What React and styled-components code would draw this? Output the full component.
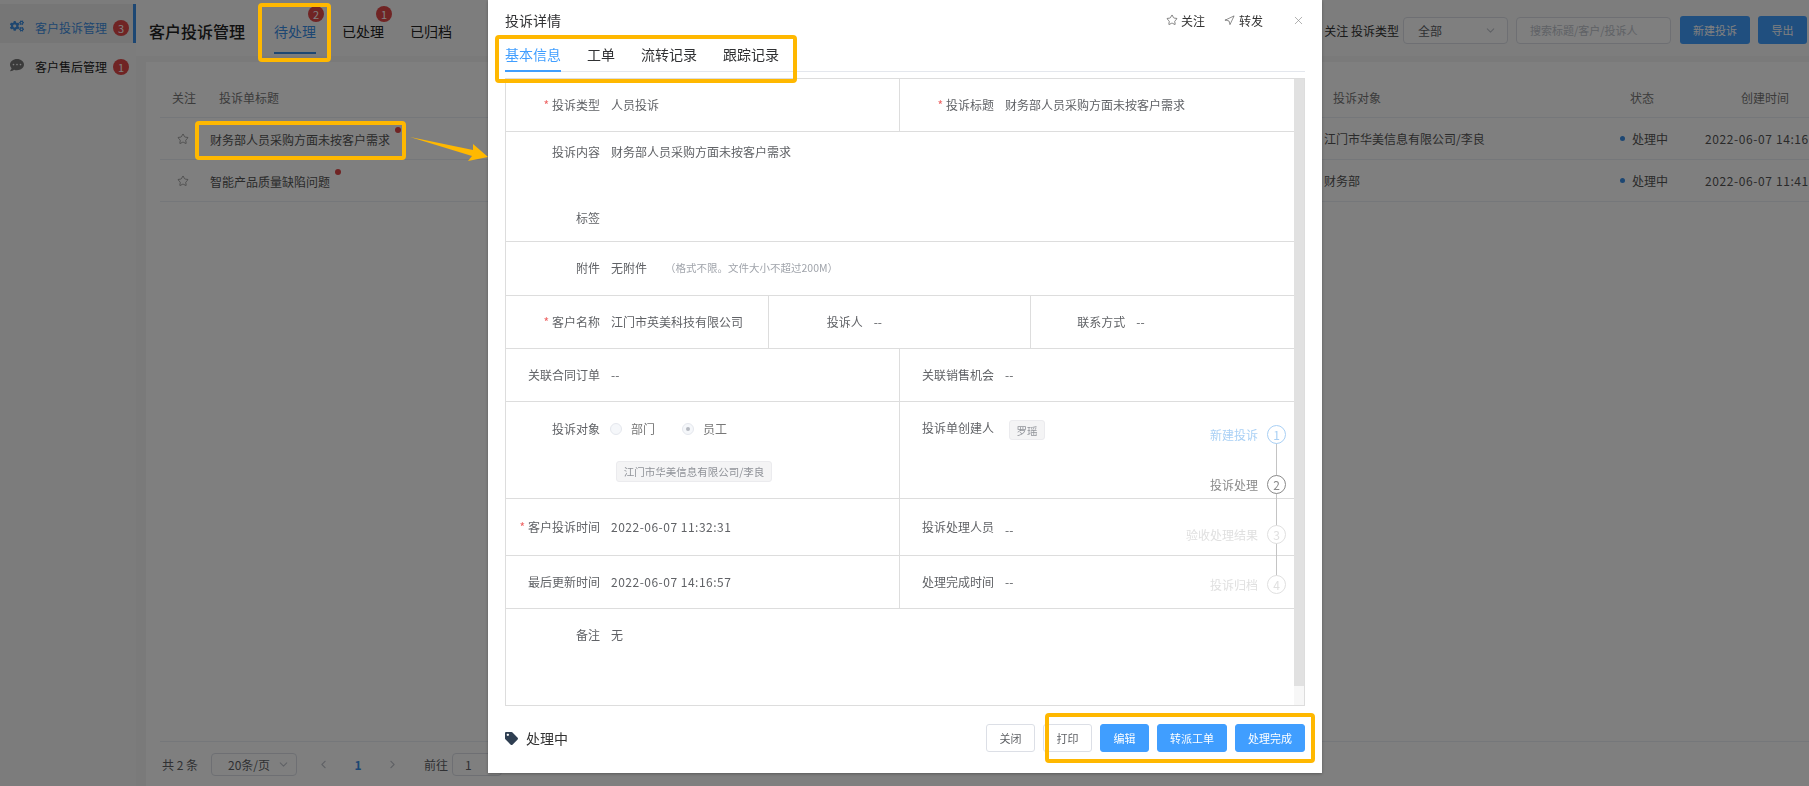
import React from 'react'
import styled, { createGlobalStyle } from 'styled-components'
import { Star, Navigation, X, ChevronDown, ChevronLeft, ChevronRight } from 'lucide-react'
import { FaCogs, FaCommentDots, FaTag } from 'react-icons/fa'

const GlobalStyle = createGlobalStyle`
  html, body { margin: 0; padding: 0; height: 100%; overflow: hidden; }
  body {
    font-family: "Noto Sans CJK SC", "Noto Sans", sans-serif;
    font-size: 12px;
    color: #333;
  }
  * { box-sizing: border-box; }
`

const Page = styled.div`
  display: flex;
  height: 100vh;
  background: #f5f5f5;
  overflow: hidden;
`
const Sidebar = styled.div`
  width: 136px;
  flex-shrink: 0;
  padding-top: 4px;
  background: #f9f9f9;
`
const SideItem = styled.div`
  display: flex;
  align-items: center;
  height: 39px;
  padding: 8px 0 0 10px;
  color: ${p => (p.$active ? '#3f8fe0' : '#222')};
  background: ${p => (p.$active ? '#ededed' : 'transparent')};
  border-right: 3px solid ${p => (p.$active ? '#3a8ee6' : 'transparent')};
  svg { font-size: 14px; color: ${p => (p.$active ? '#3f8fe0' : '#777')}; margin-top: -4px; }
  span { margin-left: 11px; width: 74px; white-space: nowrap; }
`
const Badge = styled.i`
  display: inline-flex;
  align-items: center;
  justify-content: center;
  width: 16px;
  height: 16px;
  border-radius: 50%;
  background: #e04848;
  color: #fff;
  font-style: normal;
  font-size: 11px;
  margin-left: 4px;
`
const Main = styled.div`
  flex: 1;
  min-width: 0;
  display: flex;
  flex-direction: column;
`
const Header = styled.div`
  display: flex;
  align-items: center;
  height: 56px;
  padding: 4px 2px 0 13px;
  background: #fbfbfb;
`
const PageTitle = styled.div`
  font-size: 16px;
  font-weight: 500;
  color: #222;
  width: 125px;
  margin-top: 1px;
`
const TopTabs = styled.div`
  display: flex;
  gap: 26px;
  align-self: stretch;
`
const TopTab = styled.div`
  position: relative;
  display: flex;
  align-items: center;
  font-size: 14px;
  padding-top: 6px;
  margin-bottom: 2px;
  color: ${p => (p.$active ? '#3a8ee6' : '#222')};
  border-bottom: 2px solid ${p => (p.$active ? '#3a8ee6' : 'transparent')};
`
const TabBadge = styled(Badge)`
  position: absolute;
  top: 2px;
  right: -8px;
  margin: 0;
`
const Toolbar = styled.div`
  display: flex;
  align-items: center;
  margin-left: auto;
  color: #333;
`
const FilterLabel = styled.span`
  margin-right: 4px;
  white-space: nowrap;
`
const SelectBox = styled.div`
  display: flex;
  align-items: center;
  justify-content: space-between;
  width: ${p => p.$width}px;
  height: 27px;
  padding: 0 10px 0 14px;
  border: 1px solid #dcdfe6;
  border-radius: 4px;
  background: #fff;
  color: #606266;
  margin-right: ${p => p.$gap || 0}px;
  svg { color: #c0c4cc; }
`
const SearchBox = styled.div`
  display: flex;
  align-items: center;
  width: 155px;
  height: 27px;
  padding: 0 13px;
  border: 1px solid #dcdfe6;
  border-radius: 4px;
  background: #fff;
  color: #c0c4cc;
  font-size: 11px;
  margin-right: 9px;
`
const ToolButton = styled.div`
  display: flex;
  align-items: center;
  justify-content: center;
  width: ${p => p.$width}px;
  height: 28px;
  border-radius: 3px;
  background: #409eff;
  color: #fff;
  font-size: 11px;
  margin-left: ${p => p.$gap || 0}px;
`
const Card = styled.div`
  flex: 1;
  display: flex;
  flex-direction: column;
  margin: 6px 0 0 10px;
  padding: 0 0 0 14px;
  background: #fff;
`
const TableRow = styled.div`
  display: grid;
  grid-template-columns: 50px 1114px 296px 85px 1fr;
  align-items: center;
  height: ${p => (p.$head ? '56px' : '42px')};
  padding-top: ${p => (p.$head ? '16px' : 0)};
  border-bottom: 1px solid #ebeef5;
  color: ${p => (p.$head ? '#777' : '#555')};
  white-space: nowrap;
`
const HeadCell = styled.div`
  padding-left: ${p => p.$pad || 0}px;
`
const StarCell = styled.div`
  padding: 0 0 0 17px;
  display: flex;
  color: #666;
`
const TitleCell = styled.div`
  position: relative;
  display: inline-block;
  justify-self: start;
  padding-top: 2px;
  &::after {
    content: '';
    position: absolute;
    top: -2px;
    right: -11px;
    width: 6px;
    height: 6px;
    border-radius: 50%;
    background: #e04848;
  }
`
const StatusCell = styled.div`
  display: flex;
  align-items: center;
  gap: 7px;
  &::before {
    content: '';
    width: 5px;
    height: 5px;
    border-radius: 50%;
    background: #3a8ee6;
  }
`
const DateCell = styled.div`
  letter-spacing: 0.6px;
`
const Pagination = styled.div`
  display: flex;
  align-items: center;
  margin-top: auto;
  height: 45px;
  border-top: 1px solid #ebeef5;
  padding: 0 2px;
  color: #606266;
  svg { color: #c0c4cc; }
`
const PageSelect = styled(SelectBox)`
  width: 86px;
  height: 23px;
  margin: 0 20px 0 13px;
  padding: 0 6px 0 16px;
`
const PageNumber = styled.b`
  width: 56px;
  text-align: center;
  color: #3a8ee6;
`
const GotoInput = styled.div`
  width: 50px;
  height: 23px;
  margin-left: 4px;
  padding: 2px 12px;
  border: 1px solid #dcdfe6;
  border-radius: 4px;
`
const Mask = styled.div`
  position: fixed;
  inset: 0;
  background: rgba(0, 0, 0, 0.5);
`
const Modal = styled.div`
  position: fixed;
  top: 0;
  left: 488px;
  width: 834px;
  height: 773px;
  display: flex;
  flex-direction: column;
  padding: 0 17px;
  background: #fff;
  box-shadow: 0 1px 3px rgba(0, 0, 0, 0.3);
`
const ModalHead = styled.div`
  display: flex;
  align-items: center;
  height: 40px;
  color: #333;
  white-space: nowrap;
`
const ModalTitle = styled.div`
  font-size: 14px;
  color: #303133;
  margin-right: auto;
`
const HeadAction = styled.div`
  display: flex;
  align-items: center;
  gap: ${p => p.$space || 3}px;
  margin-left: ${p => p.$gap || 0}px;
  svg { color: #444; }
`
const CloseIcon = styled(X)`
  margin: 0 0 0 29px;
  color: #888;
`
const ModalTabs = styled.div`
  display: flex;
  gap: 26px;
  height: 32px;
  border-bottom: 1px solid #e4e7ed;
`
const ModalTab = styled.div`
  font-size: 14px;
  line-height: 28px;
  height: 32px;
  color: ${p => (p.$active ? '#409eff' : '#303133')};
  border-bottom: 2px solid ${p => (p.$active ? '#409eff' : 'transparent')};
`
const FormBox = styled.div`
  position: relative;
  display: flex;
  height: 628px;
  margin-top: 6px;
  border: 1px solid #ddd;
`
const FormBody = styled.div`
  flex: 1;
  min-width: 0;
`
const ScrollTrack = styled.div`
  width: 10px;
  background: #f7f7f7;
  &::before {
    content: '';
    display: block;
    height: 607px;
    background: #e1e1e1;
  }
`
const FormRow = styled.div`
  display: flex;
  height: ${p => p.$height}px;
  border-bottom: ${p => (p.$last ? 'none' : '1px solid #ddd')};
`
const Cell = styled.div`
  display: flex;
  flex: 1 0 0;
  min-width: 0;
  align-items: ${p => (p.$top ? 'flex-start' : 'center')};
  padding-top: ${p => p.$top || 0}px;
  padding-bottom: ${p => (p.$top ? 0 : 2)}px;
  margin-left: ${p => (p.$divider ? -1 : 0)}px;
  border-left: ${p => (p.$divider ? '1px solid #ddd' : 'none')};
`
const Stack = styled.div`
  flex: 1;
  display: flex;
  flex-direction: column;
`
const Label = styled.div`
  width: 94px;
  flex-shrink: 0;
  text-align: right;
  color: #606266;
  white-space: nowrap;
  em { color: #e66; font-style: normal; margin-right: 3px; }
`
const Value = styled.div`
  margin-left: ${p => p.$left || 11}px;
  margin-top: ${p => p.$down || 0}px;
  color: #606266;
  white-space: nowrap;
  letter-spacing: ${p => (p.$date ? '0.5px' : 'normal')};
`
const Hint = styled.span`
  margin-left: 18px;
  font-size: 10.5px;
  color: #a0a4ab;
`
const RadioGroup = styled.div`
  display: flex;
  align-items: center;
  margin-left: 10px;
`
const Radio = styled.span`
  display: inline-flex;
  align-items: center;
  justify-content: center;
  width: 12px;
  height: 12px;
  margin-right: 9px;
  border: 1px solid #e4e7ed;
  border-radius: 50%;
  background: #f5f7fa;
  &::after {
    content: '';
    width: 4px;
    height: 4px;
    border-radius: 50%;
    background: ${p => (p.$checked ? '#b5b9c0' : 'transparent')};
  }
`
const RadioText = styled.span`
  color: #777;
  margin-right: ${p => p.$gap || 0}px;
`
const PlainTag = styled.div`
  display: flex;
  align-items: center;
  justify-content: center;
  width: ${p => p.$width}px;
  height: ${p => p.$height}px;
  margin: ${p => p.$margin || 0};
  font-size: 10.5px;
  color: #909399;
  background: #f4f4f5;
  border: 1px solid #ebebee;
  border-radius: 3px;
  white-space: nowrap;
`
const Steps = styled.div`
  position: absolute;
  top: 346px;
  right: 18px;
  display: flex;
  flex-direction: column;
  gap: 31px;
  &::before {
    content: '';
    position: absolute;
    top: 16px;
    bottom: 16px;
    right: 9px;
    width: 1px;
    background: #c4c4c4;
  }
`
const Step = styled.div`
  display: flex;
  align-items: center;
  justify-content: flex-end;
  gap: 9px;
  height: 19px;
  color: ${p => p.$color};
  white-space: nowrap;
  i {
    position: relative;
    display: flex;
    align-items: center;
    justify-content: center;
    width: 19px;
    height: 19px;
    border: 1px solid ${p => p.$color};
    border-radius: 50%;
    background: #fff;
    font-style: normal;
    font-size: 12px;
  }
`
const ModalFoot = styled.div`
  flex: 1;
  display: flex;
  align-items: center;
  justify-content: flex-end;
  gap: 8px;
  padding-bottom: 3px;
`
const StateText = styled.div`
  display: flex;
  align-items: center;
  gap: 8px;
  margin-right: auto;
  font-size: 14px;
  color: #333;
  svg { color: #2f3f52; font-size: 13px; }
`
const Button = styled.div`
  display: flex;
  align-items: center;
  justify-content: center;
  width: ${p => p.$width}px;
  height: 28px;
  font-size: 11px;
  border-radius: 3px;
  border: 1px solid ${p => (p.$primary ? '#409eff' : '#dcdfe6')};
  background: ${p => (p.$primary ? '#409eff' : '#fff')};
  color: ${p => (p.$primary ? '#fff' : '#606266')};
`
const Highlight = styled.div`
  position: fixed;
  left: ${p => p.$x}px;
  top: ${p => p.$y}px;
  width: ${p => p.$w}px;
  height: ${p => p.$h}px;
  border: 4px solid #ffb800;
  border-radius: 4px;
  pointer-events: none;
`
const Arrow = styled.svg`
  position: fixed;
  left: 405px;
  top: 130px;
`

function RedStar({ children }) {
  return <Label><em>*</em>{children}</Label>
}

const rows = [
  { id: 1, title: '财务部人员采购方面未按客户需求', target: '江门市华美信息有限公司/李良', time: '2022-06-07 14:16:57' },
  { id: 2, title: '智能产品质量缺陷问题', target: '财务部', time: '2022-06-07 11:41:20' },
]

const steps = [
  { n: 1, text: '新建投诉', color: '#a9d0f5' },
  { n: 2, text: '投诉处理', color: '#8a8a8a' },
  { n: 3, text: '验收处理结果', color: '#e0e0e0' },
  { n: 4, text: '投诉归档', color: '#e0e0e0' },
]

export default function App() {
  return (
    <>
      <GlobalStyle />
      <Page>
        <Sidebar>
          <SideItem $active><FaCogs /><span>客户投诉管理</span><Badge>3</Badge></SideItem>
          <SideItem><FaCommentDots /><span>客户售后管理</span><Badge>1</Badge></SideItem>
        </Sidebar>
        <Main>
          <Header>
            <PageTitle>客户投诉管理</PageTitle>
            <TopTabs>
              <TopTab $active>待处理<TabBadge>2</TabBadge></TopTab>
              <TopTab>已处理<TabBadge>1</TabBadge></TopTab>
              <TopTab>已归档</TopTab>
            </TopTabs>
            <Toolbar>
              <FilterLabel>关注 投诉类型</FilterLabel>
              <SelectBox $width={105} $gap={8}>全部<ChevronDown size={13} /></SelectBox>
              <SearchBox>搜索标题/客户/投诉人</SearchBox>
              <ToolButton $width={70}>新建投诉</ToolButton>
              <ToolButton $width={49} $gap={8}>导出</ToolButton>
            </Toolbar>
          </Header>
          <Card>
            <TableRow $head>
              <HeadCell $pad={12}>关注</HeadCell>
              <HeadCell $pad={9}>投诉单标题</HeadCell>
              <HeadCell $pad={9}>投诉对象</HeadCell>
              <HeadCell $pad={10}>状态</HeadCell>
              <HeadCell $pad={36}>创建时间</HeadCell>
            </TableRow>
            {rows.map(r => (
              <TableRow key={r.id}>
                <StarCell><Star size={12} strokeWidth={1.2} /></StarCell>
                <TitleCell>{r.title}</TitleCell>
                <div>{r.target}</div>
                <StatusCell>处理中</StatusCell>
                <DateCell>{r.time}</DateCell>
              </TableRow>
            ))}
            <Pagination>
              共 2 条
              <PageSelect>20条/页<ChevronDown size={13} /></PageSelect>
              <ChevronLeft size={13} />
              <PageNumber>1</PageNumber>
              <ChevronRight size={13} />
              <Value $left={25}>前往</Value>
              <GotoInput>1</GotoInput>
            </Pagination>
          </Card>
        </Main>
      </Page>
      <Mask />
      <Modal>
        <ModalHead>
          <ModalTitle>投诉详情</ModalTitle>
          <HeadAction><Star size={12} strokeWidth={1.3} />关注</HeadAction>
          <HeadAction $gap={19} $space={4}><Navigation size={11} strokeWidth={1.3} />转发</HeadAction>
          <CloseIcon size={13} strokeWidth={1.2} />
        </ModalHead>
        <ModalTabs>
          <ModalTab $active>基本信息</ModalTab>
          <ModalTab>工单</ModalTab>
          <ModalTab>流转记录</ModalTab>
          <ModalTab>跟踪记录</ModalTab>
        </ModalTabs>
        <FormBox>
          <FormBody>
            <FormRow $height={53}>
              <Cell><RedStar>投诉类型</RedStar><Value>人员投诉</Value></Cell>
              <Cell $divider><RedStar>投诉标题</RedStar><Value>财务部人员采购方面未按客户需求</Value></Cell>
            </FormRow>
            <FormRow $height={110}>
              <Stack>
                <Cell $top={11}><Label>投诉内容</Label><Value>财务部人员采购方面未按客户需求</Value></Cell>
                <Cell $top={33}><Label>标签</Label></Cell>
              </Stack>
            </FormRow>
            <FormRow $height={54}>
              <Cell><Label>附件</Label><Value>无附件</Value><Hint>（格式不限。文件大小不超过200M）</Hint></Cell>
            </FormRow>
            <FormRow $height={53}>
              <Cell><RedStar>客户名称</RedStar><Value>江门市英美科技有限公司</Value></Cell>
              <Cell $divider><Label>投诉人</Label><Value>--</Value></Cell>
              <Cell $divider><Label>联系方式</Label><Value>--</Value></Cell>
            </FormRow>
            <FormRow $height={53}>
              <Cell><Label>关联合同订单</Label><Value>--</Value></Cell>
              <Cell $divider><Label>关联销售机会</Label><Value>--</Value></Cell>
            </FormRow>
            <FormRow $height={97}>
              <Stack>
                <Cell $top={18}>
                  <Label>投诉对象</Label>
                  <RadioGroup>
                    <Radio /><RadioText $gap={27}>部门</RadioText>
                    <Radio $checked /><RadioText>员工</RadioText>
                  </RadioGroup>
                </Cell>
                <PlainTag $width={156} $height={21} $margin="0 0 16px 110px">江门市华美信息有限公司/李良</PlainTag>
              </Stack>
              <Cell $divider $top={17}>
                <Label>投诉单创建人</Label>
                <PlainTag $width={36} $height={20} $margin="1px 0 0 15px">罗瑶</PlainTag>
              </Cell>
            </FormRow>
            <FormRow $height={57}>
              <Cell><RedStar>客户投诉时间</RedStar><Value $date>2022-06-07 11:32:31</Value></Cell>
              <Cell $divider><Label>投诉处理人员</Label><Value $down={6}>--</Value></Cell>
            </FormRow>
            <FormRow $height={53}>
              <Cell><Label>最后更新时间</Label><Value $date>2022-06-07 14:16:57</Value></Cell>
              <Cell $divider><Label>处理完成时间</Label><Value>--</Value></Cell>
            </FormRow>
            <FormRow $height={89} $last>
              <Cell $top={17}><Label>备注</Label><Value>无</Value></Cell>
            </FormRow>
          </FormBody>
          <ScrollTrack />
          <Steps>
            {steps.map(s => (
              <Step key={s.n} $color={s.color}>{s.text}<i>{s.n}</i></Step>
            ))}
          </Steps>
        </FormBox>
        <ModalFoot>
          <StateText><FaTag />处理中</StateText>
          <Button $width={49}>关闭</Button>
          <Button $width={49}>打印</Button>
          <Button $width={49} $primary>编辑</Button>
          <Button $width={70} $primary>转派工单</Button>
          <Button $width={70} $primary>处理完成</Button>
        </ModalFoot>
      </Modal>
      <Highlight $x={258} $y={3} $w={73} $h={59} />
      <Highlight $x={195} $y={121} $w={211} $h={39} />
      <Highlight $x={495} $y={35} $w={302} $h={48} />
      <Highlight $x={1045} $y={713} $w={270} $h={50} />
      <Arrow width="90" height="40" viewBox="405 130 90 40">
        <path d="M410 137 L473 150 L473 144 L488 157 L468 161 L472 156 Z" fill="#ffb800" />
      </Arrow>
    </>
  )
}
